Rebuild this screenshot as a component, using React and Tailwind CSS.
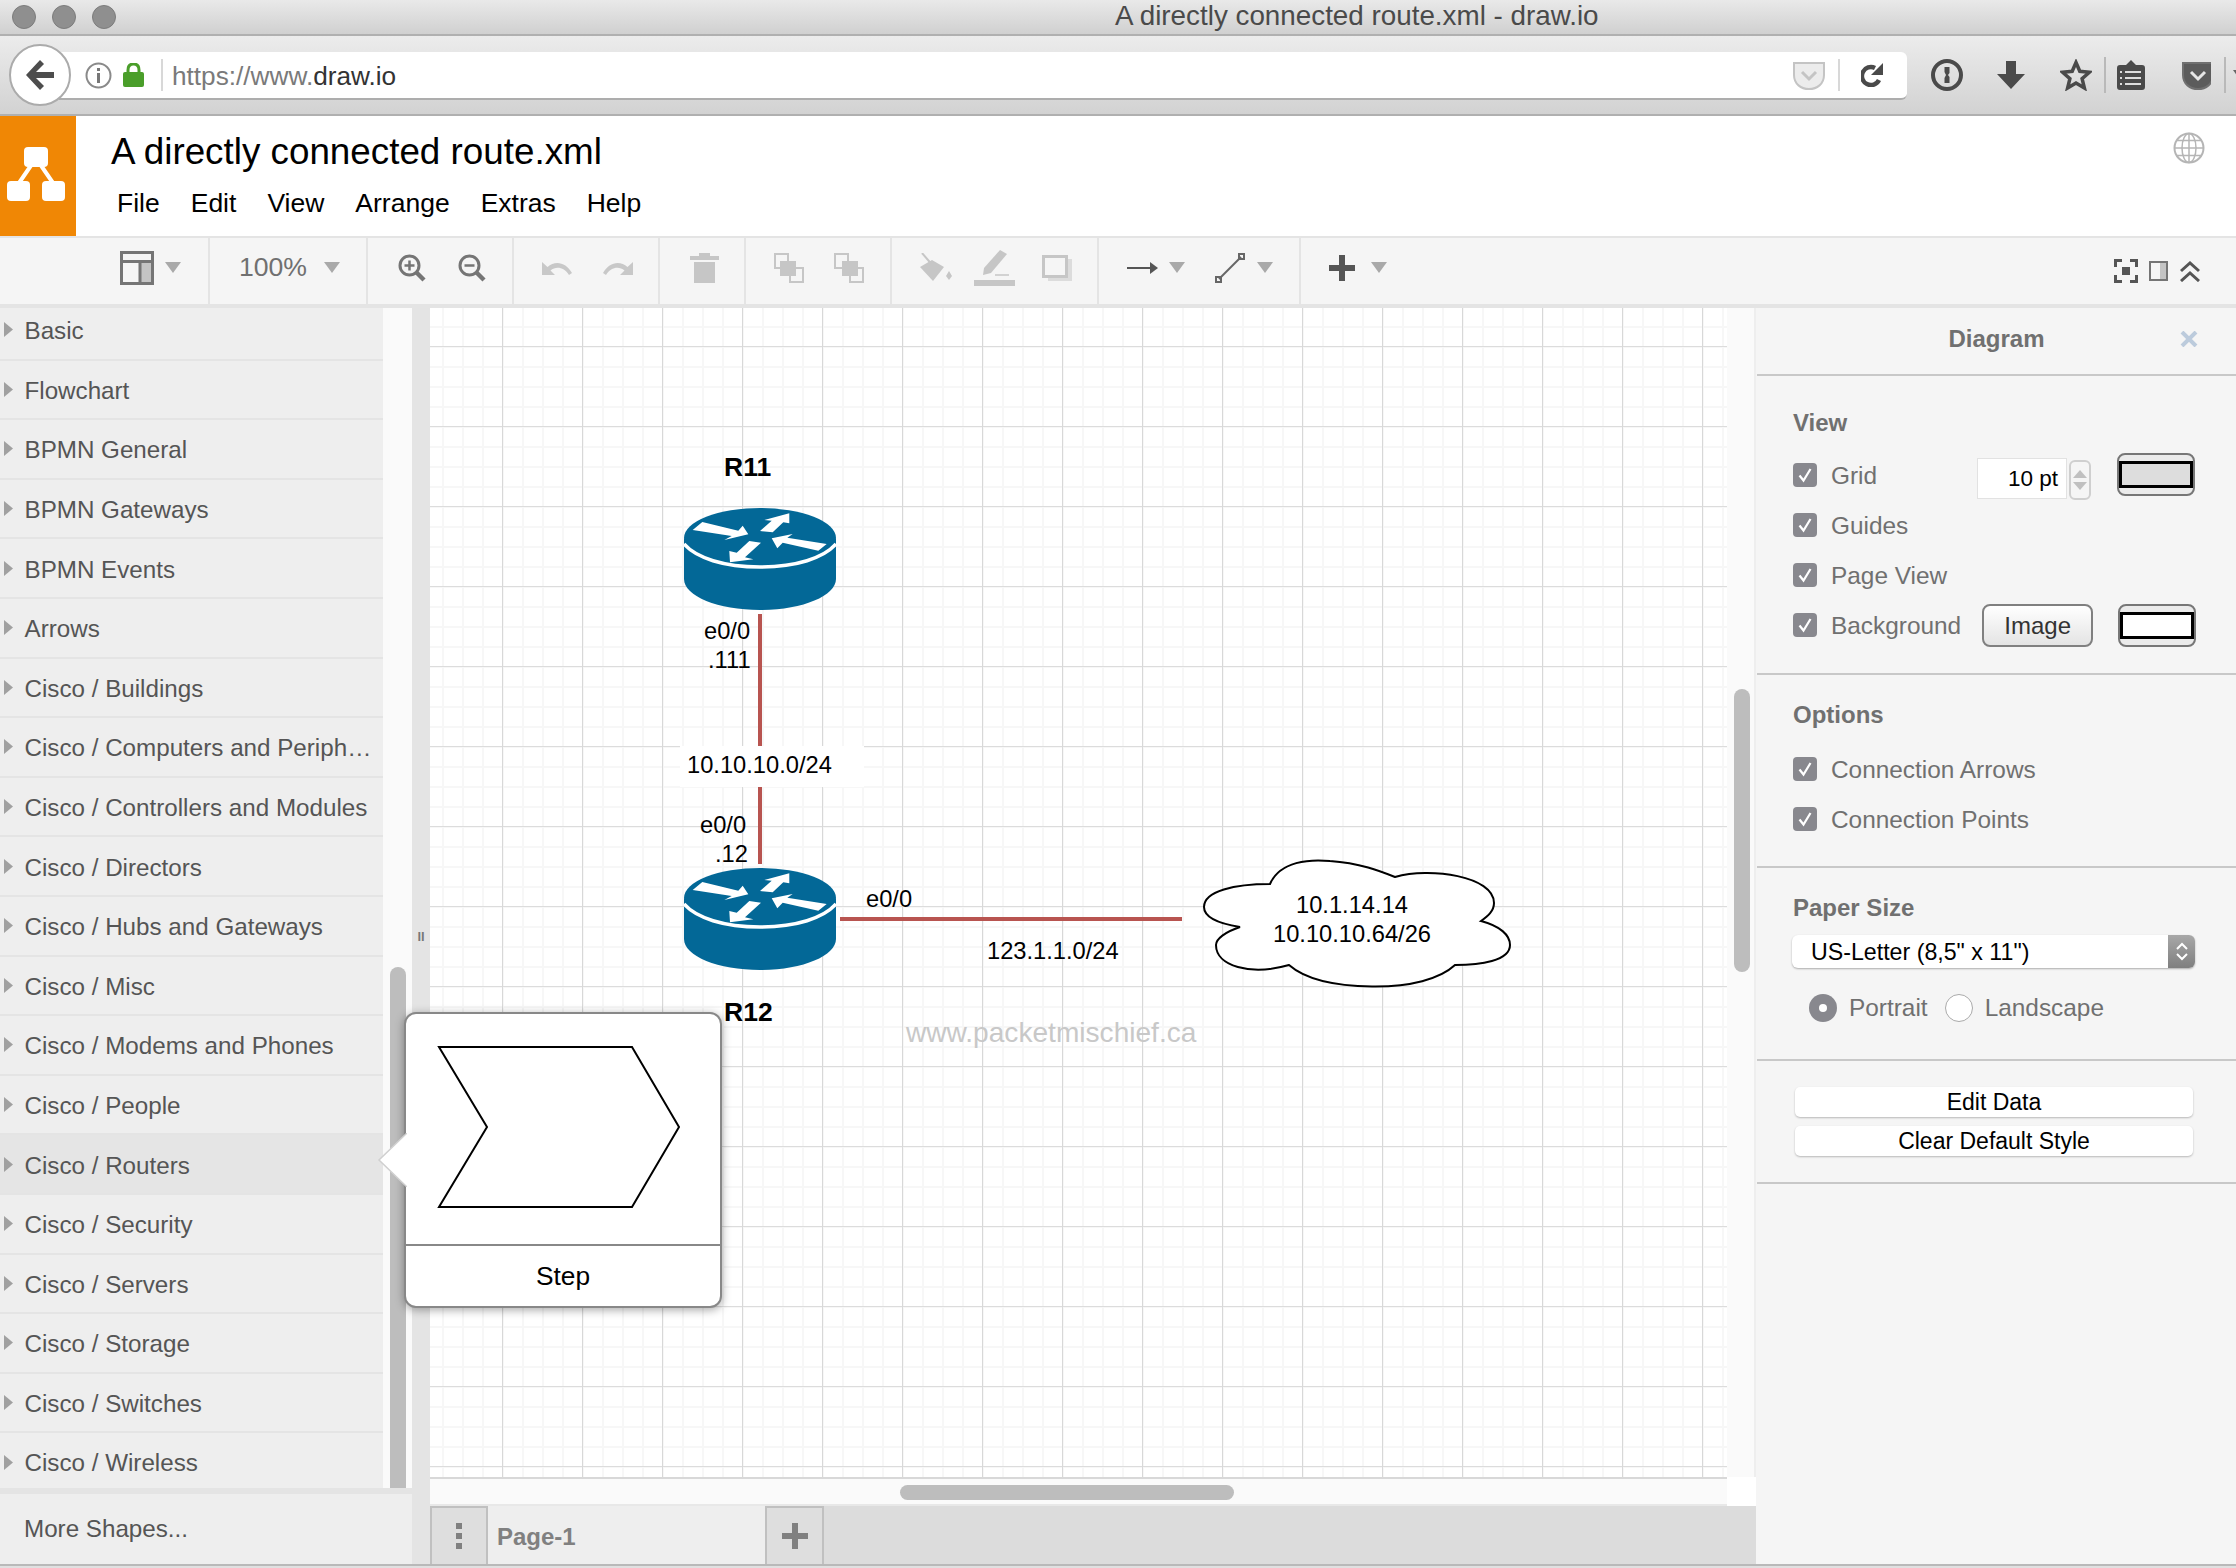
import React from 'react';

const rows = [
  'Basic', 'Flowchart', 'BPMN General', 'BPMN Gateways', 'BPMN Events', 'Arrows', 'Cisco / Buildings',
  'Cisco / Computers and Periph…', 'Cisco / Controllers and Modules', 'Cisco / Directors', 'Cisco / Hubs and Gateways',
  'Cisco / Misc', 'Cisco / Modems and Phones', 'Cisco / People', 'Cisco / Routers', 'Cisco / Security',
  'Cisco / Servers', 'Cisco / Storage', 'Cisco / Switches', 'Cisco / Wireless',
];

const Caret = ({ className = '', color = '#a9a9a9' }) => (
  <svg width="16" height="11" viewBox="0 0 16 11" className={'shrink-0 ' + className}><path d="M0 0H16L8 11Z" fill={color} /></svg>
);

const Sep = ({ className = '' }) => <div className={'w-[2px] shrink-0 bg-[#b9b9b9] ' + className}></div>;

const Pocket = ({ dim }) => (
  <svg width="32" height="29" viewBox="0 0 32 29" className="shrink-0">
    <path d="M1 2H31V14C31 23 24 28 16 28C8 28 1 23 1 14Z" fill={dim ? '#ececec' : '#5c5c5c'} stroke={dim ? '#c4c4c4' : '#707070'} strokeWidth="2" />
    <path d="M9 11L16 18L23 11" fill="none" stroke={dim ? '#c4c4c4' : '#e6e6e6'} strokeWidth="3" />
  </svg>
);

const ZoomIcon = ({ minus }) => (
  <svg width="28" height="28" viewBox="0 0 28 28" fill="none" stroke="#757575">
    <circle cx="11.5" cy="11.5" r="9.5" strokeWidth="3" />
    <path d="M18 18L26 26" strokeWidth="4.5" />
    <path d="M6.5 11.5H16.5" strokeWidth="2.5" />
    {!minus && <path d="M11.5 6.5V16.5" strokeWidth="2.5" />}
  </svg>
);

const Undo = ({ flip }) => (
  <svg width="30" height="16" viewBox="0 0 30 16" className={flip ? '-scale-x-100' : ''}>
    <path d="M0 2V15H13L8.5 10.5C14 6 22 7 27 15L30 13C24 2 13 0 5.5 7Z" fill="#c8c8c8" />
  </svg>
);

const Order = ({ back }) => (
  <svg width="30" height="30" viewBox="0 0 30 30">
    <rect x="1" y="1" width="13" height="14" fill="none" stroke="#c6c6c6" strokeWidth="2" />
    <rect x="16" y="15" width="13" height="14" fill="none" stroke="#c6c6c6" strokeWidth="2" />
    <rect x={back ? 8 : 6} y="8" width="16" height="15" fill="#c6c6c6" />
  </svg>
);

const Check = () => (
  <div className="w-6 h-6 rounded-[4px] bg-[#88888e] flex items-center justify-center shrink-0">
    <svg width="16" height="16" viewBox="0 0 16 16"><path d="M2.5 8.5L6.5 13.5L13.5 2" fill="none" stroke="#fff" strokeWidth="2.2" /></svg>
  </div>
);

const CheckRow = ({ label, children }) => (
  <div className="h-[50px] flex items-center pl-[36px]">
    <Check />
    <span className="ml-[14px] pt-[2px] text-[24.4px] text-[#707070] whitespace-nowrap">{label}</span>
    {children}
  </div>
);

const Swatch = ({ fill }) => (
  <div className="w-[78px] h-[43px] rounded-[8px] border-2 border-[#777] bg-[#ebebeb] flex items-center">
    <div className={'w-full h-[27px] border-[3px] border-black ' + fill}></div>
  </div>
);

const Section = ({ title, className = '', children }) => (
  <div className={'border-b-2 border-[#c8c8c8] ' + className}>
    <div className="pl-[36px] text-[24px] leading-[28px] font-bold text-[#707070]">{title}</div>
    {children}
  </div>
);

const Router = ({ className }) => (
  <svg width="152" height="102" viewBox="0 0 152 102" className={className}>
    <path d="M0 31V71C0 88 34 102 76 102C118 102 152 88 152 71V31Z" fill="#036897" />
    <ellipse cx="76" cy="30" rx="76" ry="30" fill="#036897" />
    <path d="M0 36C12 50 40 59 76 59C112 59 140 50 152 36" fill="none" stroke="#fff" strokeWidth="3.5" />
    <polygon points="18.3,14 54.3,22.7 58.7,17.7 64.3,26.3 40.3,32 47.7,28 8.7,22" fill="#fff" />
    <polygon points="105.3,5.3 80.3,12 87.7,12.7 76,23 88.7,24.3 99.3,14.3 105.3,15.3" fill="#fff" />
    <polygon points="87.7,30.3 108.7,26 103.3,29.7 142.7,36 134.3,42.7 98.7,34.7 93.3,40.3" fill="#fff" />
    <polygon points="46,54.3 45.3,43 52.7,44.7 65.3,33 77,34.7 61,49.3 69.3,51.3" fill="#fff" />
  </svg>
);

const Label = ({ className, children }) => (
  <div className={'absolute text-[23.7px] leading-[28px] text-black whitespace-nowrap ' + className}>{children}</div>
);

export default function App() {
  return (
    <div className="w-[2236px] h-[1568px] overflow-hidden flex flex-col bg-white font-['Liberation_Sans',Arial,sans-serif]">
      {/* window title */}
      <div className="h-[36px] shrink-0 flex items-center pl-[12px] bg-gradient-to-b from-[#e9e9e9] to-[#d0d0d0] border-b-2 border-[#b0b0b0]">
        <div className="w-6 h-6 rounded-full bg-[#8f8f8f] border border-[#7c7c7c]"></div>
        <div className="w-6 h-6 rounded-full bg-[#8f8f8f] border border-[#7c7c7c] ml-[16px]"></div>
        <div className="w-6 h-6 rounded-full bg-[#8f8f8f] border border-[#7c7c7c] ml-[16px]"></div>
        <div className="ml-[999px] -mt-[3px] text-[27.8px] leading-none text-[#4a4a4a] whitespace-nowrap">A directly connected route.xml - draw.io</div>
      </div>

      {/* browser toolbar */}
      <div className="h-[80px] shrink-0 flex items-center bg-gradient-to-b from-[#ececec] to-[#d2d2d2] border-b-2 border-[#b0b0b0]">
        <div className="relative z-10 ml-[9px] w-[62px] h-[62px] rounded-full bg-white border-2 border-[#ababab] flex items-center justify-center shrink-0">
          <svg width="28" height="30" viewBox="0 0 28 30"><path d="M14 0L18 4L10 12H28V18H10L18 26L14 30L0 15Z" fill="#4d4d4d" /></svg>
        </div>
        <div className="-ml-[12px] mt-[2px] w-[1848px] h-[48px] shrink-0 bg-white rounded-r-[6px] border-b-2 border-[#adadad] flex items-center pl-[26px] pr-[23px]">
          <svg width="27" height="27" viewBox="0 0 27 27" fill="none"><circle cx="13.5" cy="13.5" r="12" stroke="#8a8a8a" strokeWidth="2" /><rect x="12" y="11" width="3" height="10" fill="#777" /><rect x="12" y="6" width="3" height="3" fill="#777" /></svg>
          <svg width="21" height="24" viewBox="0 0 21 24" className="ml-[11px]"><path d="M5 10V7C5 3 7 1 10.5 1S16 3 16 7V10" fill="none" stroke="#4a9e2a" strokeWidth="3" /><rect y="9" width="21" height="15" rx="2" fill="#4a9e2a" /></svg>
          <Sep className="h-[32px] ml-[17px] !bg-[#d8d8d8]" />
          <div className="ml-[9px] mt-[2px] text-[26.2px] text-[#7a7a7a] leading-none"><span>https://www.</span><span className="text-[#333]">draw.io</span></div>
          <div className="flex-1"></div>
          <Pocket dim />
          <Sep className="h-[32px] ml-[13px] !bg-[#d8d8d8]" />
          <svg width="23" height="24" viewBox="0 0 23 24" fill="none" className="ml-[21px]"><path d="M18 17A9 9 0 1 1 14 5" stroke="#4a4a4a" strokeWidth="4.5" /><path d="M22 0V12H10Z" fill="#4a4a4a" /></svg>
        </div>
        <svg width="32" height="32" viewBox="0 0 32 32" fill="none" className="ml-[24px] shrink-0"><circle cx="16" cy="16" r="14" stroke="#4a4a4a" strokeWidth="4" /><path d="M13.5 8H18.5V14L17 16L18.5 18V24H13.5V19L15 16L13.5 13Z" fill="#4a4a4a" /></svg>
        <svg width="28" height="28" viewBox="0 0 28 28" className="ml-[34px] shrink-0"><path d="M9 0H19V13H28L14 28L0 13H9Z" fill="#4a4a4a" /></svg>
        <svg width="32" height="32" viewBox="0 0 32 32" fill="none" className="ml-[35px] shrink-0"><path d="M16 3.5L19.8 12.3L29.5 13.2L22.1 19.6L24.4 29L16 24L7.6 29L9.9 19.6L2.5 13.2L12.2 12.3Z" stroke="#4a4a4a" strokeWidth="3.5" /></svg>
        <Sep className="h-[36px] ml-[12px]" />
        <svg width="28" height="30" viewBox="0 0 28 30" className="ml-[11px] shrink-0"><path d="M14 0L19 5H25Q28 5 28 8V27Q28 30 25 30H3Q0 30 0 27V8Q0 5 3 5H9Z" fill="#4a4a4a" /><path d="M8 12H24M8 18H24M8 24H24" stroke="#ddd" strokeWidth="2" /><path d="M3 12H5M3 18H5M3 24H5" stroke="#ddd" strokeWidth="2" /></svg>
        <div className="ml-[37px] w-[29px] shrink-0 overflow-hidden"><Pocket /></div>
        <Sep className="h-[36px] ml-[13px]" />
        <Caret className="ml-[7px]" color="#666" />
      </div>

      {/* app header */}
      <div className="h-[120px] shrink-0 flex">
        <div className="w-[76px] bg-[#f08705] shrink-0">
          <svg width="76" height="120" viewBox="0 0 76 120">
            <path d="M32 48L19 67M40 48L53 67" stroke="#fff" strokeWidth="4" />
            <rect x="24" y="31" width="24" height="20" rx="4" fill="#fff" />
            <rect x="7" y="65" width="23" height="20" rx="4" fill="#fff" />
            <rect x="42" y="65" width="23" height="20" rx="4" fill="#fff" />
          </svg>
        </div>
        <div className="pl-[35px] flex-1">
          <div className="text-[36.8px] leading-[42px] mt-[15px] text-black whitespace-nowrap">A directly connected route.xml</div>
          <div className="flex mt-[15px] pl-[6px] gap-[31px] text-[26.5px] leading-[30px] text-black">
            <span>File</span><span>Edit</span><span>View</span><span>Arrange</span><span>Extras</span><span>Help</span>
          </div>
        </div>
        <svg width="32" height="32" viewBox="0 0 32 32" fill="none" stroke="#b5b5b5" strokeWidth="1.5" className="mt-[16px] mr-[31px]">
          <circle cx="16" cy="16" r="14.5" strokeWidth="2" />
          <ellipse cx="16" cy="16" rx="7" ry="14.5" />
          <path d="M16 1.5V30.5M1.5 16H30.5M4 8.5H28M4 23.5H28" />
        </svg>
      </div>

      {/* diagram toolbar */}
      <div className="h-[72px] shrink-0 flex bg-[#f5f5f5] border-t-2 border-b-[4px] border-[#e4e4e4]">
        <div className="w-[210px] shrink-0 border-r-2 border-[#e4e4e4] flex items-center pl-[120px] pb-[7px]">
          <svg width="34" height="34" viewBox="0 0 34 34"><rect x="20" y="11" width="12" height="21" fill="#c4c4c4" /><path d="M1.5 1.5H32.5V32.5H1.5ZM1.5 10.5H32.5M20 10.5V32.5" fill="none" stroke="#757575" strokeWidth="3" /></svg>
          <Caret className="ml-[11px]" />
        </div>
        <div className="w-[158px] shrink-0 border-r-2 border-[#e4e4e4] flex items-center pl-[29px] pb-[7px]">
          <span className="text-[26.6px] text-[#707070] leading-none">100%</span>
          <Caret className="ml-[17px]" />
        </div>
        <div className="w-[146px] shrink-0 border-r-2 border-[#e4e4e4] flex items-center pl-[30px] gap-[32px] pb-[7px]">
          <ZoomIcon /><ZoomIcon minus />
        </div>
        <div className="w-[146px] shrink-0 border-r-2 border-[#e4e4e4] flex items-center pl-[28px] gap-[31px] pb-[7px]">
          <Undo /><Undo flip />
        </div>
        <div className="w-[86px] shrink-0 border-r-2 border-[#e4e4e4] flex items-center pl-[30px] pb-[7px]">
          <svg width="29" height="30" viewBox="0 0 29 30"><path d="M9 0H20V3H29V7H0V3H9ZM4 9H25V30H4Z" fill="#c6c6c6" /></svg>
        </div>
        <div className="w-[146px] shrink-0 border-r-2 border-[#e4e4e4] flex items-center pl-[28px] gap-[30px] pb-[7px]">
          <Order /><Order back />
        </div>
        <div className="w-[207px] shrink-0 border-r-2 border-[#e4e4e4] flex items-center pl-[28px] pb-[7px]">
          <svg width="32" height="29" viewBox="0 0 32 29" fill="none"><path d="M2 0L14 14" stroke="#c6c6c6" strokeWidth="2" /><path d="M0 14L12 7L24 14L13 28Z" fill="#c6c6c6" /><path d="M29 18L32 23L29 27L26 23Z" fill="#c6c6c6" /></svg>
          <svg width="41" height="36" viewBox="0 0 41 36" className="ml-[22px]"><path d="M26 0L33 4L17 23L9 25L10 18Z" fill="#c6c6c6" /><path d="M21 25H35" stroke="#c6c6c6" strokeWidth="1.5" /><rect y="30" width="41" height="6" fill="#c6c6c6" /></svg>
          <svg width="30" height="26" viewBox="0 0 30 26" className="ml-[27px]"><path d="M26 4H30V26H6V22H26Z" fill="#dcdcdc" /><rect x="1.5" y="1.5" width="23" height="20" fill="none" stroke="#c6c6c6" strokeWidth="3" /></svg>
        </div>
        <div className="w-[202px] shrink-0 border-r-2 border-[#e4e4e4] flex items-center pl-[28px] pb-[7px]">
          <svg width="31" height="12" viewBox="0 0 31 12"><path d="M0 6H25" stroke="#555" strokeWidth="2" /><path d="M23 0L31 6L23 12Z" fill="#555" /></svg>
          <Caret className="ml-[11px]" />
          <svg width="30" height="30" viewBox="0 0 30 30" fill="none" stroke="#666" className="ml-[30px]"><path d="M4 26L26 4" strokeWidth="2" /><rect x="1" y="24" width="5" height="5" strokeWidth="2" /><rect x="24" y="1" width="5" height="5" strokeWidth="2" /></svg>
          <Caret className="ml-[12px]" />
        </div>
        <div className="flex-1 flex items-center pl-[28px]">
          <svg width="26" height="26" viewBox="0 0 26 26" className="-mt-[7px]"><path d="M10 0H16V10H26V16H16V26H10V16H0V10H10Z" fill="#555" /></svg>
          <Caret className="ml-[16px] -mt-[7px]" />
          <div className="flex-1"></div>
          <svg width="24" height="24" viewBox="0 0 24 24" fill="none" stroke="#555" strokeWidth="3"><path d="M1.5 8V1.5H8M16 1.5H22.5V8M22.5 16V22.5H16M8 22.5H1.5V16" /><rect x="8" y="8" width="8" height="8" fill="#555" stroke="none" /></svg>
          <svg width="19" height="20" viewBox="0 0 19 20" fill="none" className="ml-[11px]"><rect x="11" y="1" width="7" height="18" fill="#c4c4c4" /><rect x="1" y="1" width="17" height="18" stroke="#757575" strokeWidth="2" /></svg>
          <svg width="20" height="21" viewBox="0 0 20 21" fill="none" stroke="#555" strokeWidth="3" className="ml-[12px] mr-[36px]"><path d="M1 10L10 2L19 10M1 20L10 12L19 20" /></svg>
        </div>
      </div>

      {/* main */}
      <div className="relative h-[1256px] shrink-0 flex">
        {/* shapes sidebar */}
        <div className="w-[430px] shrink-0 flex">
          <div className="w-[412px] shrink-0 flex flex-col">
            <div className="h-[1180px] shrink-0 flex overflow-hidden">
              <div className="w-[383px] shrink-0">
                {rows.map((r, i) => (
                  <div key={r} className={'h-[59.6px] border-b-2 border-[#e4e4e4] flex items-center pl-[4px] ' + (r === 'Cisco / Routers' ? 'bg-[#e5e5e5] ' : 'bg-[#eeeeee] ') + (i === 0 ? '-mt-[7px]' : '')}>
                    <svg width="9" height="15" viewBox="0 0 9 15" className="shrink-0"><path d="M0 0L9 7.5L0 15Z" fill="#a0a0a0" /></svg>
                    <span className="ml-[11.5px] mt-[3px] text-[24.2px] leading-none text-[#555] whitespace-nowrap">{r}</span>
                  </div>
                ))}
              </div>
              <div className="flex-1 bg-[#fafafa] pl-[7px]">
                <div className="mt-[659px] w-4 h-[522px] rounded-t-full bg-[#bdbdbd]"></div>
              </div>
            </div>
            <div className="h-[6px] shrink-0 bg-[#e4e4e4]"></div>
            <div className="flex-1 bg-[#eeeeee] flex items-center pl-[24px] text-[24.2px] text-[#555]">More Shapes...</div>
          </div>
          <div className="flex-1 bg-[#e4e4e4] flex items-center justify-center">
            <span className="text-[13px] leading-none text-[#777] font-bold">ll</span>
          </div>
        </div>

        {/* canvas column */}
        <div className="w-[1326px] shrink-0 flex flex-col">
          <div className="h-[1169px] shrink-0 flex">
            <div className="relative w-[1297px] shrink-0 overflow-hidden bg-white bg-[linear-gradient(to_right,#d8d8d8_1px,transparent_1px),linear-gradient(to_bottom,#dcdcdc_1px,transparent_1px),linear-gradient(to_right,#f7f7f7_2px,transparent_2px),linear-gradient(to_bottom,#f7f7f7_2px,transparent_2px)] bg-[length:80px_80px,80px_80px,20px_20px,20px_20px] bg-[position:72px_0,0_38px,12px_0,0_18px]">
              <div className="absolute left-[294px] top-[145px] text-[26.5px] leading-[28px] font-bold text-black">R11</div>
              <Router className="absolute left-[254px] top-[200px]" />
              <div className="absolute left-[328px] top-[306px] w-[3.7px] h-[132px] bg-[#b85450]"></div>
              <Label className="left-[274px] top-[309px]">e0/0</Label>
              <Label className="left-[278px] top-[338px]">.111</Label>
              <div className="absolute left-[250px] top-[438px] w-[184px] h-[41px] bg-white"></div>
              <Label className="left-[257px] top-[443px]">10.10.10.0/24</Label>
              <div className="absolute left-[328px] top-[479px] w-[3.7px] h-[77px] bg-[#b85450]"></div>
              <Label className="left-[270px] top-[503px]">e0/0</Label>
              <Label className="left-[285px] top-[532px]">.12</Label>
              <Router className="absolute left-[254px] top-[560px]" />
              <div className="absolute left-[294px] top-[690px] text-[26.5px] leading-[28px] font-bold text-black">R12</div>
              <div className="absolute left-[410px] top-[609px] w-[342px] h-[4px] bg-[#b85450]"></div>
              <Label className="left-[436px] top-[577px]">e0/0</Label>
              <Label className="left-[557px] top-[629px]">123.1.1.0/24</Label>
              <svg width="315" height="135" viewBox="1200 855 315 135" className="absolute left-[770px] top-[548px]">
                <path d="M1270 883C1280 860 1310 858 1330 860C1360 862 1380 870 1395 876C1430 866 1494 875 1494 902C1494 910 1488 915 1481 920C1500 925 1510 934 1510 944C1510 960 1480 964 1455 964C1440 978 1410 986 1372 985.5C1335 985 1305 978 1289 964C1250 975 1216 965 1216 944C1216 938 1225 931 1240 926C1215 922 1204 915 1204 906C1204 890 1235 883 1270 883Z" fill="#fff" stroke="#000" strokeWidth="2" />
              </svg>
              <Label className="left-[842px] top-[583px] w-[160px] text-center">10.1.14.14</Label>
              <Label className="left-[842px] top-[612px] w-[160px] text-center">10.10.10.64/26</Label>
              <div className="absolute left-[476px] top-[710px] text-[28.1px] leading-[30px] text-[#c8c8c8] whitespace-nowrap">www.packetmischief.ca</div>
            </div>
            <div className="flex-1 bg-[#fafafa] pl-[7px] border-r-2 border-[#eeeeee]">
              <div className="mt-[381px] w-4 h-[283px] rounded-full bg-[#bdbdbd]"></div>
            </div>
          </div>
          <div className="h-[29px] shrink-0 flex">
            <div className="w-[1297px] shrink-0 bg-[#fafafa] pl-[470px] pt-[6px] border-t-2 border-b-2 border-t-[#d8d8d8] border-b-[#e8e8e8]">
              <div className="w-[334px] h-[15px] rounded-full bg-[#bdbdbd]"></div>
            </div>
            <div className="flex-1 bg-white"></div>
          </div>
          <div className="flex-1 bg-[#dcdcdc] flex items-stretch">
            <div className="w-[58px] bg-[#dedede] border-2 border-b-0 border-[#c0c0c0] flex items-center justify-center">
              <svg width="6" height="26" viewBox="0 0 6 26" fill="#808080"><rect y="0" width="6" height="6" /><rect y="10" width="6" height="6" /><rect y="20" width="6" height="6" /></svg>
            </div>
            <div className="w-[277px] bg-[#eeeeee] flex items-center pl-[9px] pt-[3px] text-[24px] font-bold text-[#808080]">Page-1</div>
            <div className="w-[59px] bg-[#dedede] border-2 border-b-0 border-[#c0c0c0] flex items-center justify-center">
              <svg width="26" height="26" viewBox="0 0 26 26"><path d="M10 0H16V10H26V16H16V26H10V16H0V10H10Z" fill="#808080" /></svg>
            </div>
          </div>
        </div>

        {/* format panel */}
        <div className="flex-1 bg-[#f5f5f5] pl-[1px]">
          <div className="h-[68px] border-b-2 border-[#c8c8c8] flex items-center justify-center relative">
            <span className="text-[24px] font-bold text-[#707070] -mt-[4px]">Diagram</span>
            <svg width="18" height="16" viewBox="0 0 18 16" className="absolute right-[38px] top-[23px]"><path d="M2 1L16 15M16 1L2 15" stroke="#bccbdc" strokeWidth="4" /></svg>
          </div>
          <Section title="View" className="pt-[33px] h-[299px]">
            <div className="mt-[13px]">
              <CheckRow label="Grid">
                <div className="ml-[100px] w-[90px] h-[41px] bg-white border border-[#e2e2e2] flex items-center justify-end pr-[8px] mt-[7px] text-[22.5px] text-black shrink-0">10 pt</div>
                <div className="ml-[2px] w-[22px] h-[40px] rounded-[6px] border-2 border-[#cfcfcf] flex flex-col items-center justify-center gap-[4px] mt-[10px] shrink-0">
                  <svg width="14" height="8" viewBox="0 0 14 8"><path d="M0 8L7 0L14 8Z" fill="#c0c0c0" /></svg>
                  <svg width="14" height="8" viewBox="0 0 14 8"><path d="M0 0L7 8L14 0Z" fill="#c0c0c0" /></svg>
                </div>
                <div className="ml-[26px] -mt-[1px] shrink-0"><Swatch fill="bg-[#dddddd]" /></div>
              </CheckRow>
              <CheckRow label="Guides" />
              <CheckRow label="Page View" />
              <CheckRow label="Background">
                <div className="ml-[21px] w-[111px] h-[43px] rounded-[8px] border-2 border-[#808080] bg-gradient-to-b from-white to-[#e4e4e4] flex items-center justify-center pt-[2px] text-[24px] text-[#333] shrink-0">Image</div>
                <div className="ml-[25px] shrink-0"><Swatch fill="bg-white" /></div>
              </CheckRow>
            </div>
          </Section>
          <Section title="Options" className="pt-[26px] h-[193px]">
            <div className="mt-[15px]">
              <CheckRow label="Connection Arrows" />
              <CheckRow label="Connection Points" />
            </div>
          </Section>
          <Section title="Paper Size" className="pt-[26px] h-[193px]">
            <div className="ml-[35px] mt-[13px] w-[403px] h-[33px] rounded-[6px] bg-white shadow-[0_1px_2px_rgba(0,0,0,0.3)] flex items-center overflow-hidden">
              <span className="pl-[19px] pt-[2px] flex-1 text-[23.2px] text-black leading-none">US-Letter (8,5" x 11")</span>
              <div className="w-[27px] h-full bg-gradient-to-b from-[#a8a8a8] to-[#7f7f7f] flex flex-col items-center justify-center gap-[3px]">
                <svg width="12" height="8" viewBox="0 0 12 8" fill="none" stroke="#fff" strokeWidth="2"><path d="M1 7L6 2L11 7" /></svg>
                <svg width="12" height="8" viewBox="0 0 12 8" fill="none" stroke="#fff" strokeWidth="2"><path d="M1 1L6 6L11 1" /></svg>
              </div>
            </div>
            <div className="mt-[26px] ml-[52px] flex items-center h-[28px] text-[24.4px] text-[#707070]">
              <div className="w-7 h-7 rounded-full bg-[#88888e] flex items-center justify-center shrink-0"><div className="w-2 h-2 rounded-full bg-white"></div></div>
              <span className="ml-[12px]">Portrait</span>
              <div className="ml-[17px] w-7 h-7 rounded-full bg-white border border-[#aaa] shrink-0"></div>
              <span className="ml-[12px]">Landscape</span>
            </div>
          </Section>
          <div className="h-[123px] border-b-2 border-[#c8c8c8] pt-[26px] pl-[38px] flex flex-col gap-[9px]">
            <div className="w-[398px] h-[30px] rounded-[5px] bg-white shadow-[0_1px_2px_rgba(0,0,0,0.25)] flex items-center justify-center text-[23px] text-black leading-none">Edit Data</div>
            <div className="w-[398px] h-[30px] rounded-[5px] bg-white shadow-[0_1px_2px_rgba(0,0,0,0.25)] flex items-center justify-center text-[23px] text-black leading-none">Clear Default Style</div>
          </div>
        </div>

        {/* shape preview tooltip */}
        <div className="absolute left-[404px] top-[704px] w-[318px] h-[296px] z-20 rounded-[12px] border-2 border-[#888] bg-white shadow-[0_2px_10px_rgba(0,0,0,0.35)] flex flex-col">
          <svg width="30" height="54" viewBox="0 0 30 54" className="absolute -left-[29px] top-[119px]"><path d="M30 0L2 27L30 54Z" fill="#fff" /><path d="M30 0L2 27L30 54" fill="none" stroke="#d0d0d0" strokeWidth="1.5" /></svg>
          <div className="h-[232px] shrink-0 border-b-2 border-[#888] pl-[31px] pt-[31px]">
            <svg width="244" height="164" viewBox="0 0 244 164"><path d="M2 2H195L242 82L195 162H2L50 82Z" fill="#fff" stroke="#000" strokeWidth="2" /></svg>
          </div>
          <div className="flex-1 flex items-center justify-center pt-[2px] text-[26.3px] text-black">Step</div>
        </div>
      </div>
      <div className="h-[4px] shrink-0 bg-[#b9b9b9] border-b-2 border-[#e0e0e0]"></div>
    </div>
  );
}
